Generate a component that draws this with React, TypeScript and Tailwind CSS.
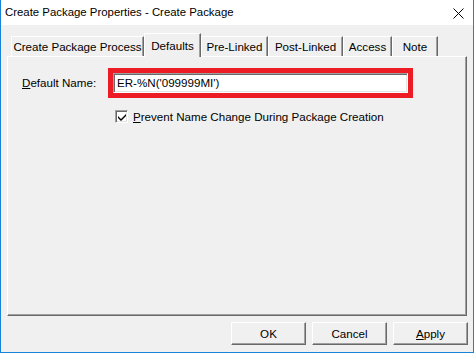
import React from 'react';

const tabs = [
  { label: 'Create Package Process', w: 'w-[133px]' },
  { label: 'Defaults', w: 'w-[57px]', active: true },
  { label: 'Pre-Linked', w: 'w-[67px]' },
  { label: 'Post-Linked', w: 'w-[75px]' },
  { label: 'Access', w: 'w-[49px]' },
  { label: 'Note', w: 'w-[46px]' },
];

const Button = ({ children }: { children: React.ReactNode }) => (
  <button className="w-[75px] h-[23px] bg-[#f0f0f0] border-t border-l border-white border-r border-b border-r-[#696969] border-b-[#696969] shadow-[inset_-1px_-1px_0_#a0a0a0] flex items-center justify-center text-black">
    {children}
  </button>
);

export default function App() {
  return (
    <div className="w-[474px] h-[353px] flex flex-col bg-[#f0f0f0] border-x border-b border-[#1883d7] font-['Liberation_Sans',Arial,sans-serif] text-[11.6px] text-black select-none">
      {/* title bar */}
      <div className="h-[25px] bg-white flex items-center justify-between pl-[4px] pr-[9px]">
        <span className="text-[11.4px]">Create Package Properties - Create Package</span>
        <svg width="11" height="11" viewBox="0 0 11 11" className="mt-[1px]">
          <path d="M0.5 0.5 L10.5 10.5 M10.5 0.5 L0.5 10.5" stroke="#000" strokeWidth="1" />
        </svg>
      </div>

      <div className="flex-1 flex flex-col pl-[6px] pr-[5px] pt-[8px]">
        {/* tabs */}
        <div className="h-[23px] flex items-end pl-[4px]">
          {tabs.map((t) =>
            t.active ? (
              <div
                key={t.label}
                className={`${t.w} h-[24px] -mb-px relative z-10 bg-[#f0f0f0] border-t border-l border-white border-r border-r-[#696969] shadow-[inset_-1px_0_0_#a0a0a0] flex items-start justify-center pt-[3px]`}
              >
                {t.label}
              </div>
            ) : (
              <div
                key={t.label}
                className={`${t.w} h-[20px] bg-[#f0f0f0] border-t border-l border-white border-r border-r-[#696969] shadow-[inset_-1px_0_0_#a0a0a0] flex items-center justify-center pt-[1px]`}
              >
                {t.label}
              </div>
            )
          )}
        </div>

        {/* panel */}
        <div className="w-[460px] h-[260px] border-t border-l border-white border-r border-b border-r-[#696969] border-b-[#696969] shadow-[inset_-1px_-1px_0_#a0a0a0]">
          <div className="pl-[14px] pt-[11px]">
            <div className="flex items-center">
              <span className="w-[86px]">
                <span className="underline">D</span>efault Name:
              </span>
              <div className="w-[305px] h-[30px] border-[5px] border-[#ed1c24]">
                <div className="w-full h-full bg-white border-t border-l border-[#a0a0a0] border-r border-b border-r-white border-b-white shadow-[inset_1px_1px_0_#696969,inset_-1px_-1px_0_#e3e3e3] flex items-center pl-[3px]">
                  ER-%N('099999MI')
                </div>
              </div>
            </div>
            <div className="flex items-center ml-[93px] mt-[10px]">
              <div className="w-[13px] h-[13px] bg-white border-t border-l border-[#a0a0a0] border-r border-b border-r-white border-b-white shadow-[inset_1px_1px_0_#696969,inset_-1px_-1px_0_#e3e3e3] flex items-center justify-center">
                <svg width="8" height="8" viewBox="0 0 8 8">
                  <path d="M0 3 L0 5 L3 8 L8 3 L8 1 L3 6 Z" fill="#000" />
                </svg>
              </div>
              <span className="ml-[5px]">
                <span className="underline">P</span>revent Name Change During Package Creation
              </span>
            </div>
          </div>
        </div>

        {/* buttons */}
        <div className="flex justify-end gap-[6px] mt-[6px]">
          <Button>OK</Button>
          <Button>Cancel</Button>
          <Button>
            <span>
              <span className="underline">A</span>pply
            </span>
          </Button>
        </div>
      </div>
    </div>
  );
}
